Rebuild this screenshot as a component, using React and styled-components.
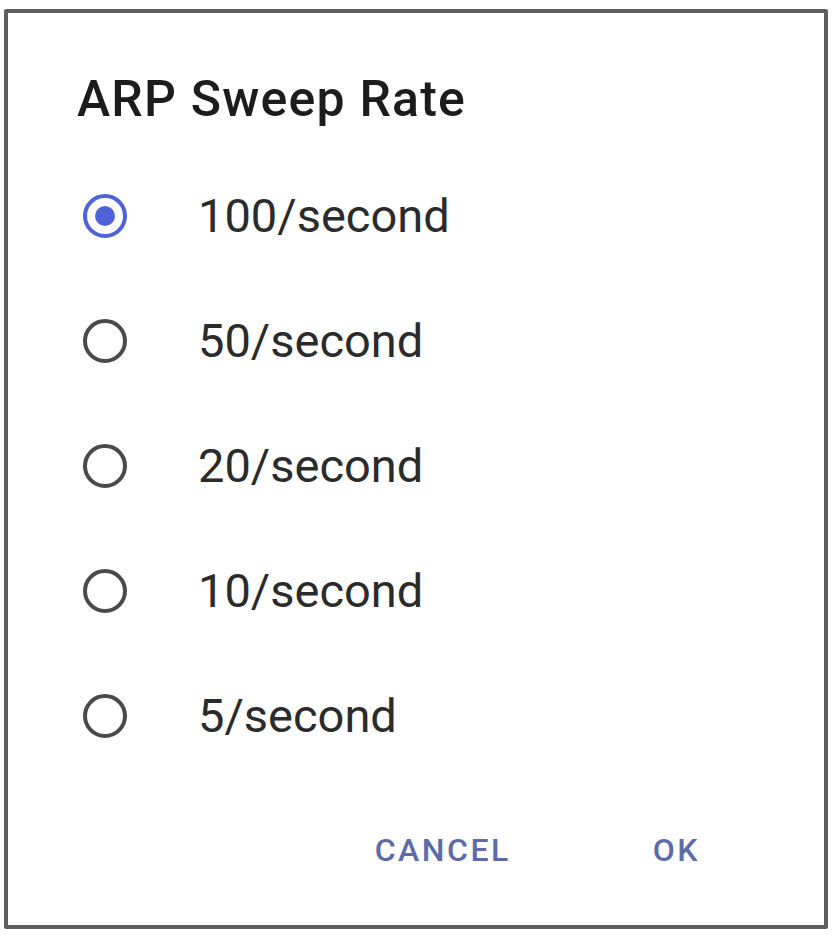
import React, { useState } from "react";
import styled, { createGlobalStyle } from "styled-components";

const GlobalStyle = createGlobalStyle`
  html, body {
    margin: 0;
    padding: 0;
    background: #ffffff;
  }
  body {
    font-family: Roboto, "Liberation Sans", sans-serif;
  }
`;

const Page = styled.div`
  width: 834px;
  height: 935px;
  padding: 9px 0 0 4px;
  box-sizing: border-box;
`;

const Dialog = styled.div`
  width: 824px;
  height: 920px;
  box-sizing: border-box;
  border: 4px solid #5e5e5e;
  border-radius: 2px;
  background: #fff;
  padding-top: 58px;
  display: flex;
  flex-direction: column;
`;

const Title = styled.h2`
  margin: 0 0 25px 69px;
  font-size: 50px;
  line-height: 57px;
  font-weight: 500;
  letter-spacing: 1.2px;
  color: #1c1c1c;
`;

const Options = styled.div`
  display: flex;
  flex-direction: column;
`;

const Row = styled.label`
  height: 125px;
  display: flex;
  align-items: center;
  cursor: pointer;
`;

const Radio = styled.span`
  width: 44px;
  height: 44px;
  box-sizing: border-box;
  margin-left: 75px;
  border-radius: 50%;
  border: 4px solid ${(p) => (p.checked ? "#4f62d6" : "#4a4a4a")};
  display: flex;
  align-items: center;
  justify-content: center;

  &::after {
    content: "";
    width: 20px;
    height: 20px;
    border-radius: 50%;
    background: #4f62d6;
    display: ${(p) => (p.checked ? "block" : "none")};
  }
`;

const Label = styled.span`
  margin-left: 71px;
  font-size: 47px;
  color: #2b2b2b;
`;

const Actions = styled.div`
  margin-top: 42px;
  height: 60px;
  display: flex;
  justify-content: flex-end;
  align-items: center;
  gap: 142px;
  padding-right: 124px;
`;

const TextButton = styled.button`
  border: none;
  background: none;
  padding: 0;
  font-family: Roboto, "Liberation Sans", sans-serif;
  font-size: 32px;
  font-weight: 500;
  letter-spacing: 2.5px;
  color: #5d6ba8;
  cursor: pointer;
`;

const rates = ["100/second", "50/second", "20/second", "10/second", "5/second"];

export default function App() {
  const [selected, setSelected] = useState(0);

  return (
    <Page>
      <GlobalStyle />
      <Dialog>
        <Title>ARP Sweep Rate</Title>
        <Options>
          {rates.map((rate, i) => (
            <Row key={rate} onClick={() => setSelected(i)}>
              <Radio checked={selected === i} />
              <Label>{rate}</Label>
            </Row>
          ))}
        </Options>
        <Actions>
          <TextButton>CANCEL</TextButton>
          <TextButton>OK</TextButton>
        </Actions>
      </Dialog>
    </Page>
  );
}
